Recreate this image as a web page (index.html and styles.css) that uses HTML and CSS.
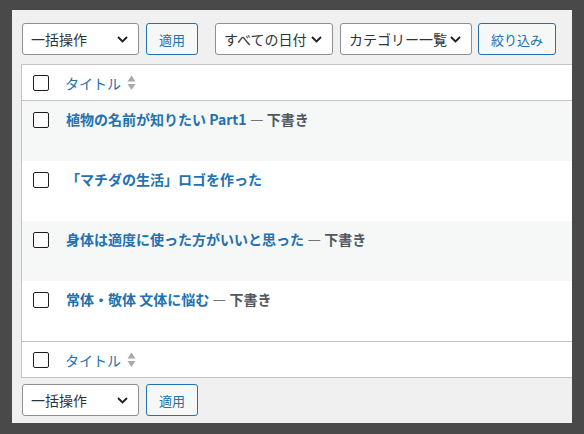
FILE: index.html
```html
<!DOCTYPE html>
<html lang="ja">
<head>
<meta charset="utf-8">
<title>投稿一覧</title>
<link rel="stylesheet" href="styles.css">
</head>
<body>
<div class="frame">
  <div class="screen">
    <div class="tablenav">
      <div class="select bulk"><span>一括操作</span><svg class="chev" width="11" height="7" viewBox="0 0 11 7"><polyline points="1,1 5.5,5.5 10,1"/></svg></div>
      <div class="button apply">適用</div>
      <div class="select date"><span>すべての日付</span><svg class="chev" width="11" height="7" viewBox="0 0 11 7"><polyline points="1,1 5.5,5.5 10,1"/></svg></div>
      <div class="select cat"><span>カテゴリー一覧</span><svg class="chev" width="11" height="7" viewBox="0 0 11 7"><polyline points="1,1 5.5,5.5 10,1"/></svg></div>
      <div class="button filter">絞り込み</div>
    </div>

    <div class="table">
      <div class="row head">
        <div class="check"><span class="cb"></span></div>
        <div class="col-title"><a class="sort-link">タイトル</a><svg class="sort" width="9" height="16" viewBox="0 0 9 16"><polygon points="4.5,0.5 8.5,6.5 0.5,6.5"/><polygon points="0.5,9 8.5,9 4.5,15"/></svg></div>
      </div>
      <div class="row alt">
        <div class="check"><span class="cb"></span></div>
        <div class="title"><a>植物の名前が知りたい Part1</a> — <span class="state">下書き</span></div>
      </div>
      <div class="row">
        <div class="check"><span class="cb"></span></div>
        <div class="title"><a>「マチダの生活」ロゴを作った</a></div>
      </div>
      <div class="row alt">
        <div class="check"><span class="cb"></span></div>
        <div class="title"><a>身体は適度に使った方がいいと思った</a> — <span class="state">下書き</span></div>
      </div>
      <div class="row">
        <div class="check"><span class="cb"></span></div>
        <div class="title"><a>常体・敬体 文体に悩む</a> — <span class="state">下書き</span></div>
      </div>
      <div class="row head foot">
        <div class="check"><span class="cb"></span></div>
        <div class="col-title"><a class="sort-link">タイトル</a><svg class="sort" width="9" height="16" viewBox="0 0 9 16"><polygon points="4.5,0.5 8.5,6.5 0.5,6.5"/><polygon points="0.5,9 8.5,9 4.5,15"/></svg></div>
      </div>
    </div>

    <div class="tablenav bottom">
      <div class="select bulk"><span>一括操作</span><svg class="chev" width="11" height="7" viewBox="0 0 11 7"><polyline points="1,1 5.5,5.5 10,1"/></svg></div>
      <div class="button apply">適用</div>
    </div>
  </div>
</div>
</body>
</html>
```

FILE: styles.css
```css
html, body {
  margin: 0;
  padding: 0;
  background: #494949;
}

.frame {
  padding: 10px 12px 11px 12px;
}

.screen {
  width: 560px;
  height: 413px;
  box-sizing: border-box;
  background: #f0f0f1;
  overflow: hidden;
  padding: 13px 0 0 10px;
  font-family: "Noto Sans CJK JP", "Noto Sans", sans-serif;
  font-size: 14px;
  color: #2c3338;
}

.tablenav {
  display: flex;
  align-items: center;
  height: 32px;
}

.select {
  display: flex;
  align-items: center;
  justify-content: space-between;
  height: 32px;
  box-sizing: border-box;
  border: 1px solid #8c8f94;
  border-radius: 3px;
  background: #fff;
  padding: 0 10px 0 8px;
  font-size: 14px;
  line-height: 20px;
  color: #2c3338;
  white-space: nowrap;
  flex: none;
}

.select.bulk { width: 117px; margin-right: 7px; }
.select.date { width: 118px; margin-right: 7px; }
.select.cat { width: 132px; margin-right: 6px; padding-right: 10px; }

.chev {
  flex: none;
  fill: none;
  stroke: #1e1e1e;
  stroke-width: 1.8;
}

.button {
  display: flex;
  align-items: center;
  justify-content: center;
  height: 32px;
  box-sizing: border-box;
  border: 1px solid #2271b1;
  border-radius: 3px;
  background: #f6f7f7;
  color: #2271b1;
  font-size: 13px;
  flex: none;
}

.button.apply { width: 52px; margin-right: 17px; }
.button.filter { width: 78px; }

.table {
  width: 640px;
  margin: 9px 0 0 -1px;
  border: 1px solid #c3c4c7;
  background: #fff;
}

.row {
  display: flex;
  align-items: flex-start;
  height: 60px;
  background: #fff;
}

.row.alt { background: #f6f7f7; }

.row.head {
  height: 35px;
  align-items: center;
  border-bottom: 1px solid #c3c4c7;
}

.row.foot {
  border-bottom: none;
  border-top: 1px solid #c3c4c7;
}

.check {
  width: 16px;
  padding-left: 11px;
  flex: none;
  display: flex;
}

.row:not(.head) .check { padding-top: 11px; }

.cb {
  display: block;
  width: 16px;
  height: 16px;
  box-sizing: border-box;
  border: 1.5px solid #1e1e1e;
  border-radius: 2px;
  background: #fff;
}

.col-title {
  display: flex;
  align-items: center;
  padding-left: 16px;
}

.sort-link {
  color: #2271b1;
  font-size: 14px;
  line-height: 20px;
}

.sort {
  margin-left: 6px;
  fill: #a7aaad;
}

.title {
  padding: 8px 0 0 17px;
  font-size: 14px;
  line-height: 20px;
  font-weight: 700;
  color: #50575e;
  white-space: nowrap;
}

.title a { color: #2271b1; }
.state { color: #50575e; }

.tablenav.bottom { margin-top: 6px; }
```
